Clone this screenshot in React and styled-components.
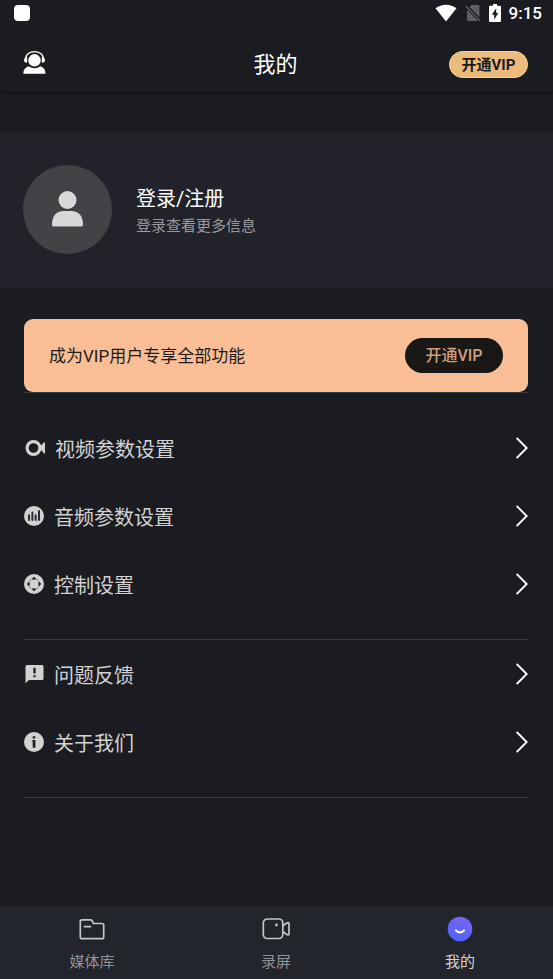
import React from 'react';
import styled, { createGlobalStyle } from 'styled-components';

const GlobalStyle = createGlobalStyle`
    * {
        box-sizing: border-box;
    }
    body {
        margin: 0;
        background: #1b1c21;
        color: #fff;
        font-family: Roboto, "Noto Sans CJK SC", sans-serif;
    }
    button {
        border: 0;
        padding: 0;
        background: none;
        color: inherit;
        font: inherit;
        cursor: pointer;
    }
    svg {
        display: block;
        flex: none;
    }
`;

const Page = styled.div`
    display: flex;
    flex-direction: column;
    min-height: 100vh;
`;

const StatusBar = styled.div`
    display: flex;
    align-items: center;
    justify-content: space-between;
    height: 26px;
    padding: 0 11px 0 14px;
`;

const AppDot = styled.span`
    width: 16px;
    height: 16px;
    border-radius: 4px;
    background: #fff;
`;

const StatusIcons = styled.div`
    display: flex;
    align-items: center;
    gap: 8px;
`;

const Clock = styled.time`
    font-size: 17px;
    font-weight: 500;
    line-height: 26px;
`;

const Header = styled.header`
    display: grid;
    grid-template-columns: 1fr auto 1fr;
    align-items: center;
    height: 65px;
    padding: 12px 25px 0 23px;
    box-shadow: 0 2px 4px rgba(0, 0, 0, 0.4);
`;

const SupportButton = styled.button`
    justify-self: start;
`;

const Title = styled.h1`
    margin: 0;
    font-size: 22px;
    font-weight: 400;
    line-height: 32px;
`;

const HeaderVip = styled.button`
    justify-self: end;
    width: 79px;
    height: 27px;
    border: 1px solid #f8d3a0;
    border-radius: 14px;
    background: #ebbb7c;
    color: #1b1a1c;
    font-size: 15px;
    font-weight: 700;
    line-height: 24px;
`;

const Profile = styled.button`
    display: flex;
    align-items: center;
    gap: 24px;
    width: 100%;
    height: 156px;
    margin-top: 41px;
    padding: 0 23px 2px;
    background: #21222a;
    text-align: left;
`;

const Avatar = styled.span`
    display: flex;
    align-items: center;
    justify-content: center;
    width: 89px;
    height: 89px;
    border-radius: 50%;
    background: #424347;
`;

const ProfileText = styled.span`
    display: flex;
    flex-direction: column;
    gap: 2px;
    padding-top: 3px;
`;

const ProfileName = styled.span`
    font-size: 20px;
    line-height: 28px;
`;

const ProfileHint = styled.span`
    color: #98989b;
    font-size: 15px;
    line-height: 22px;
`;

const Main = styled.main`
    flex: 1;
    padding: 31px 25px 24px 24px;
`;

const VipCard = styled.section`
    display: flex;
    align-items: center;
    justify-content: space-between;
    height: 73px;
    padding: 0 25px;
    border-radius: 9px;
    background: #f9be96;
    color: #1e1b19;
`;

const VipText = styled.p`
    margin: 0;
    font-size: 17px;
    line-height: 24px;
`;

const VipButton = styled.button`
    width: 98px;
    height: 35px;
    border-radius: 18px;
    background: #191816;
    color: #cf9e7d;
    font-size: 16px;
    font-weight: 500;
    line-height: 35px;
`;

const MenuGroup = styled.ul`
    margin: 0;
    padding: ${({ $first }) => ($first ? '21px' : '0')} 0 21px;
    border-top: ${({ $first }) => ($first ? '1px solid #393a3e' : '0')};
    border-bottom: 1px solid #393a3e;
    list-style: none;
`;

const MenuRow = styled.button`
    display: flex;
    align-items: center;
    gap: 10px;
    width: 100%;
    height: 68px;
    color: #d2d2d3;
    text-align: left;
`;

const MenuLabel = styled.span`
    flex: 1;
    padding-top: 4px;
    font-size: 20px;
    line-height: 28px;
`;

const TabBar = styled.nav`
    display: grid;
    grid-template-columns: repeat(3, 1fr);
    height: 73px;
    padding-right: 1px;
    background: #22252c;
`;

const Tab = styled.button`
    display: flex;
    flex-direction: column;
    align-items: center;
    gap: 9px;
    padding-top: 10px;
    color: ${({ $active }) => ($active ? '#d4d4d6' : '#919398')};
    font-size: 15px;
    line-height: 22px;
`;

const WifiIcon = () => (
    <svg width="22" height="18" viewBox="0 0 22 18" fill="#fff">
        <path d="M0.5 4.3C6.5-.4 15.500-.4 21.500 4.300L11 17.500Z" />
    </svg>
);

const NoSimIcon = () => (
    <svg width="16" height="18" viewBox="0 0 16 18">
        <path d="M6.500 1H13.500Q14.500 1 14.500 2V13.300L4.500 3ZM2 5.700 13 17H3Q2 17 2 16Z" fill="#5e5f63" />
        <path d="M.7 2 15.300 17" stroke="#5e5f63" strokeWidth="1.300" />
    </svg>
);

const BatteryIcon = () => (
    <svg width="12" height="18" viewBox="0 0 12 18">
        <path d="M4 0H8V1.800H11Q12 1.800 12 2.800V17Q12 18 11 18H1Q0 18 0 17V2.800Q0 1.800 1 1.800H4Z" fill="#fff" />
        <path d="M7.200 4.300 2.800 10.700H5.200V15.500L9.300 8.900H7.200Z" fill="#1b1c21" />
    </svg>
);

const SupportIcon = () => (
    <svg width="23" height="27" viewBox="0 0 23 27" fill="#fff">
        <path d="M2.500 8.500C2.500-2 20.500-2 20.500 8.500" fill="none" stroke="#fff" strokeWidth="1.200" />
        <path d="M3.400 6Q1 6.300 1 9T3.700 11.800L4.200 11.300V6.300ZM19.600 6Q22 6.300 22 9T19.300 11.800L18.800 11.300V6.300Z" />
        <circle cx="11.500" cy="9.300" r="6.200" />
        <path d="M5.500 15.200Q11.500 19.200 17.500 15.200 22.500 17 22.500 22.700H.3Q.3 17 5.500 15.200Z" />
    </svg>
);

const PersonIcon = () => (
    <svg width="32" height="36" viewBox="0 0 32 36" fill="#d8d8d8">
        <circle cx="15.500" cy="9" r="9" />
        <path d="M0 33.500C0 25 4.500 20 11.500 20H19.500C26.500 20 31 25 31 33.500Q31 35.500 29.500 35.500H1.500Q0 35.500 0 33.500Z" />
    </svg>
);

const VideoIcon = () => (
    <svg width="21" height="20" viewBox="0 0 21 20">
        <circle cx="9.500" cy="10" r="6.400" fill="none" stroke="#d2d2d3" strokeWidth="3.200" />
        <path d="M15.300 9.800 20 4.300Q21 3.900 21 5V15Q21 16 20 15.400Z" fill="#d2d2d3" />
    </svg>
);

const AudioIcon = () => (
    <svg width="20" height="20" viewBox="0 0 20 20">
        <circle cx="10" cy="10" r="10" fill="#d2d2d3" />
        <path d="M5 9.200V14M8.400 6.500V14M11.700 9.200V14M15 5V14" stroke="#2c2d32" strokeWidth="2" strokeLinecap="round" />
    </svg>
);

const ControlIcon = () => (
    <svg width="20" height="20" viewBox="0 0 20 20">
        <circle cx="10" cy="10" r="10" fill="#d2d2d3" />
        <path d="M10 2.800 12.800 5.600H7.200ZM10 17.200 12.800 14.400H7.200ZM2.800 10 5.600 7.200V12.800ZM17.200 10 14.400 7.200V12.800Z" fill="#1b1c21" />
        <path d="M7.200 5 5 7.200M12.800 5 15 7.200M7.200 15 5 12.800M12.800 15 15 12.800" stroke="#8b8c8f" strokeWidth="0.800" />
    </svg>
);

const FeedbackIcon = () => (
    <svg width="20" height="20" viewBox="0 0 20 20">
        <path d="M3 1H18Q19.500 1 19.500 2.500V14.500Q19.500 16 18 16H5L1.500 19.300V2.500Q1.500 1 3 1Z" fill="#d2d2d3" />
        <path d="M10.500 3.800V9.500M10.500 11.300V13.300" stroke="#1b1c21" strokeWidth="2.200" />
    </svg>
);

const InfoIcon = () => (
    <svg width="20" height="20" viewBox="0 0 20 20">
        <circle cx="10" cy="10" r="10" fill="#d2d2d3" />
        <path d="M8.700 4.200H11.300V6.500H8.700ZM8.200 8H11.400V15.800H8.700V9.200H8.200Z" fill="#1b1c21" />
    </svg>
);

const ChevronIcon = () => (
    <svg width="12" height="22" viewBox="0 0 12 22">
        <path d="M1.200 1.500 10.700 11 1.200 20.500" fill="none" stroke="#fff" strokeWidth="1.800" strokeLinecap="round" />
    </svg>
);

const FolderIcon = () => (
    <svg width="26" height="26" viewBox="0 0 26 26" fill="none" stroke="#c4c5c7" strokeWidth="1.700" strokeLinecap="round" strokeLinejoin="round">
        <path d="M3 3.800H11.500Q12.500 3.800 13 4.600L14.500 7.500H23Q24.700 7.500 24.700 9.200V21Q24.700 22.700 23 22.700H3Q1.300 22.700 1.300 21V5.500Q1.300 3.800 3 3.800Z" />
        <path d="M5.500 10.700H11.500" />
    </svg>
);

const RecordIcon = () => (
    <svg width="28" height="26" viewBox="0 0 28 26" fill="none" stroke="#c4c5c7" strokeWidth="1.700" strokeLinejoin="round">
        <rect x="1.300" y="3" width="19.500" height="19.500" rx="4" />
        <path d="M20.800 9.800 25.300 6.800Q27 6 27 7.800V17.700Q27 19.500 25.300 18.700L20.800 15.700" />
        <circle cx="14.500" cy="9" r="1.400" fill="#c4c5c7" stroke="none" />
    </svg>
);

const SmileIcon = () => (
    <svg width="26" height="26" viewBox="0 0 26 26">
        <defs>
            <linearGradient id="smile" x1="1" y1="0" x2="0.500" y2="1">
                <stop offset="0" stopColor="#7a68f0" />
                <stop offset="1" stopColor="#5560fb" />
            </linearGradient>
        </defs>
        <circle cx="13" cy="13" r="12.300" fill="url(#smile)" />
        <path d="M9 14.500Q13 18.300 17 14.500" fill="none" stroke="#fff" strokeWidth="2" strokeLinecap="round" />
    </svg>
);

const settings = [
    { label: '视频参数设置', Icon: VideoIcon },
    { label: '音频参数设置', Icon: AudioIcon },
    { label: '控制设置', Icon: ControlIcon },
];

const support = [
    { label: '问题反馈', Icon: FeedbackIcon },
    { label: '关于我们', Icon: InfoIcon },
];

const tabs = [
    { label: '媒体库', Icon: FolderIcon },
    { label: '录屏', Icon: RecordIcon },
    { label: '我的', Icon: SmileIcon, active: true },
];

const Menu = ({ items, first }) => (
    <MenuGroup $first={first}>
        {items.map(({ label, Icon }) => (
            <li key={label}>
                <MenuRow type="button">
                    <Icon />
                    <MenuLabel>{label}</MenuLabel>
                    <ChevronIcon />
                </MenuRow>
            </li>
        ))}
    </MenuGroup>
);

const App = () => (
    <Page>
        <GlobalStyle />
        <StatusBar>
            <AppDot />
            <StatusIcons>
                <WifiIcon />
                <NoSimIcon />
                <BatteryIcon />
                <Clock>9:15</Clock>
            </StatusIcons>
        </StatusBar>
        <Header>
            <SupportButton type="button" aria-label="客服">
                <SupportIcon />
            </SupportButton>
            <Title>我的</Title>
            <HeaderVip type="button">开通VIP</HeaderVip>
        </Header>
        <Profile type="button">
            <Avatar>
                <PersonIcon />
            </Avatar>
            <ProfileText>
                <ProfileName>登录/注册</ProfileName>
                <ProfileHint>登录查看更多信息</ProfileHint>
            </ProfileText>
        </Profile>
        <Main>
            <VipCard>
                <VipText>成为VIP用户专享全部功能</VipText>
                <VipButton type="button">开通VIP</VipButton>
            </VipCard>
            <Menu items={settings} first />
            <Menu items={support} />
        </Main>
        <TabBar>
            {tabs.map(({ label, Icon, active }) => (
                <Tab key={label} type="button" $active={active}>
                    <Icon />
                    {label}
                </Tab>
            ))}
        </TabBar>
    </Page>
);

export default App;
